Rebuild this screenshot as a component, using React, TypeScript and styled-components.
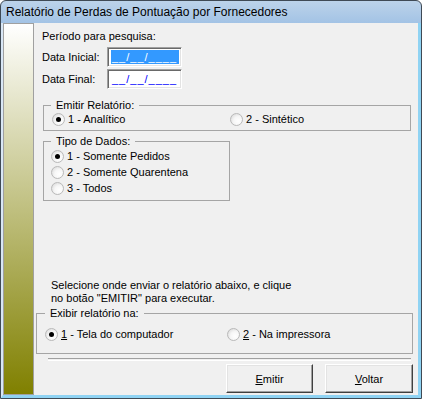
import React from 'react';
import styled, { createGlobalStyle } from 'styled-components';

const GlobalStyle = createGlobalStyle`
  html, body {
    margin: 0;
    padding: 0;
    background: #ffffff;
  }
  body {
    font-family: "Liberation Sans", Arial, sans-serif;
    font-size: 11px;
    color: #000;
  }
`;

const Window = styled.div`
  width: 422px;
  height: 399px;
  box-sizing: border-box;
  border: 1px solid #3f4a55;
  border-radius: 6px 6px 0 0;
  background: linear-gradient(#bcd3ea, #a3c3e5 22px, #a3c3e5);
  display: flex;
  flex-direction: column;
  overflow: hidden;
`;

const TitleBar = styled.div`
  height: 22px;
  flex: none;
  display: flex;
  align-items: center;
  padding-left: 5px;
  font-family: "Liberation Sans", Arial, sans-serif;
  font-size: 12px;
  color: #000;
`;

const Frame = styled.div`
  flex: 1;
  display: flex;
  border-left: 2px solid #d9e7f5;
  border-right: 3px solid #8fd3f3;
  border-bottom: 3px solid #8fd3f3;
  background: #f0f0f0;
  min-height: 0;
`;

const SidePanel = styled.div`
  width: 31px;
  flex: none;
  box-sizing: border-box;
  border: 1px solid #a0a0a0;
  background: linear-gradient(#ffffff, #808000);
`;

const Content = styled.div`
  flex: 1;
  display: flex;
  flex-direction: column;
  padding-bottom: 2px;
`;

const Caption = styled.div<{ $top?: number; $left?: number }>`
  line-height: 13px;
  margin-top: ${p => p.$top ?? 0}px;
  margin-left: ${p => p.$left ?? 0}px;
`;

const FieldRow = styled.div<{ $top: number }>`
  display: flex;
  align-items: center;
  height: 20px;
  margin-top: ${p => p.$top}px;
  margin-left: 8px;
`;

const FieldLabel = styled.span`
  width: 65px;
  line-height: 13px;
`;

const MaskInput = styled.div`
  width: 75px;
  height: 20px;
  box-sizing: border-box;
  border: 1px solid;
  border-color: #a0a0a0 #ffffff #ffffff #a0a0a0;
  box-shadow: inset 1px 1px #696969, inset -1px -1px #e3e3e3;
  background: #fff;
  padding: 2px 2px 0 3px;
  display: flex;
`;

const MaskText = styled.span<{ $selected?: boolean }>`
  display: block;
  height: 14px;
  line-height: 14px;
  padding-left: 1px;
  letter-spacing: 1px;
  flex: ${p => (p.$selected ? 1 : 'none')};
  background: ${p => (p.$selected ? '#3399ff' : 'transparent')};
  color: ${p => (p.$selected ? '#ffffff' : '#0000ff')};
`;

const GroupBox = styled.div<{ $top: number; $left: number; $width: number; $height: number }>`
  position: relative;
  box-sizing: border-box;
  margin-top: ${p => p.$top}px;
  margin-left: ${p => p.$left}px;
  width: ${p => p.$width}px;
  height: ${p => p.$height}px;
  border: 1px solid #a5a5a5;
`;

const Legend = styled.span<{ $left?: number }>`
  position: absolute;
  top: -7px;
  left: ${p => p.$left ?? 7}px;
  padding: 0 5px;
  line-height: 13px;
  background: #f0f0f0;
`;

const OptionGrid = styled.div<{ $cols: string; $padTop: number; $padLeft: number }>`
  display: grid;
  grid-template-columns: ${p => p.$cols};
  padding: ${p => p.$padTop}px 0 0 ${p => p.$padLeft}px;
`;

const Option = styled.label<{ $height?: number }>`
  display: flex;
  align-items: center;
  gap: 2px;
  height: ${p => p.$height ?? 13}px;
  line-height: 13px;
`;

const RadioCircle = styled.span<{ $checked?: boolean }>`
  position: relative;
  flex: none;
  width: 13px;
  height: 13px;
  box-sizing: border-box;
  border-radius: 50%;
  border: 1px solid #b9b9b9;
  background: radial-gradient(circle at 65% 65%, #ffffff 0%, #f6f6f6 45%, #d2d2d2 100%);
  margin-right: 1px;
  &::after {
    content: '';
    display: ${p => (p.$checked ? 'block' : 'none')};
    position: absolute;
    left: 3px;
    top: 3px;
    width: 5px;
    height: 5px;
    border-radius: 50%;
    background: #000;
  }
`;

const Separator = styled.div`
  margin: 4px 7px 0 14px;
  height: 1px;
  border-top: 1px solid #a0a0a0;
  border-bottom: 1px solid #ffffff;
`;

const ButtonRow = styled.div`
  display: flex;
  justify-content: flex-end;
  gap: 12px;
  margin-top: 3px;
  margin-right: 5px;
`;

const Button = styled.button<{ $width: number }>`
  width: ${p => p.$width}px;
  height: 29px;
  box-sizing: border-box;
  border: 1px solid;
  border-color: #ffffff #404040 #404040 #ffffff;
  box-shadow: inset -1px -1px #a0a0a0, inset 1px 1px #e3e3e3;
  background: #f0f0f0;
  font-family: "Liberation Sans", Arial, sans-serif;
  font-size: 11px;
  color: #000;
  padding: 0;
`;

const Key = styled.span`
  text-decoration: underline;
`;

type RadioProps = { checked?: boolean; height?: number; children: React.ReactNode };

const Radio = ({ checked, height, children }: RadioProps) => (
  <Option $height={height}>
    <RadioCircle $checked={checked} />
    <span>{children}</span>
  </Option>
);

export default function App() {
  return (
    <>
      <GlobalStyle />
      <Window>
        <TitleBar>Relatório de Perdas de Pontuação por Fornecedores</TitleBar>
        <Frame>
          <SidePanel />
          <Content>
            <Caption $top={7} $left={8}>Período para pesquisa:</Caption>
            <FieldRow $top={4}>
              <FieldLabel>Data Inicial:</FieldLabel>
              <MaskInput>
                <MaskText $selected>__/__/____</MaskText>
              </MaskInput>
            </FieldRow>
            <FieldRow $top={2}>
              <FieldLabel>Data Final:</FieldLabel>
              <MaskInput>
                <MaskText>__/__/____</MaskText>
              </MaskInput>
            </FieldRow>

            <GroupBox $top={16} $left={9} $width={368} $height={26}>
              <Legend>Emitir Relatório:</Legend>
              <OptionGrid $cols="178px auto" $padTop={7} $padLeft={8}>
                <Radio checked>1 - Analítico</Radio>
                <Radio>2 - Sintético</Radio>
              </OptionGrid>
            </GroupBox>

            <GroupBox $top={10} $left={9} $width={187} $height={60}>
              <Legend>Tipo de Dados:</Legend>
              <OptionGrid $cols="auto" $padTop={6} $padLeft={7}>
                <Radio checked height={16}>1 - Somente Pedidos</Radio>
                <Radio height={16}>2 - Somente Quarentena</Radio>
                <Radio height={16}>3 - Todos</Radio>
              </OptionGrid>
            </GroupBox>

            <Caption style={{ marginTop: 'auto' }} $left={17}>
              Selecione onde enviar o relatório abaixo, e clique
              <br />
              no botão "EMITIR" para executar.
            </Caption>

            <GroupBox $top={8} $left={2} $width={377} $height={41}>
              <Legend $left={8}>Exibir relatório na:</Legend>
              <OptionGrid $cols="182px auto" $padTop={14} $padLeft={8}>
                <Radio checked><Key>1</Key> - Tela do computador</Radio>
                <Radio><Key>2</Key> - Na impressora</Radio>
              </OptionGrid>
            </GroupBox>

            <Separator />

            <ButtonRow>
              <Button $width={87}><Key>E</Key>mitir</Button>
              <Button $width={88}><Key>V</Key>oltar</Button>
            </ButtonRow>
          </Content>
        </Frame>
      </Window>
    </>
  );
}
